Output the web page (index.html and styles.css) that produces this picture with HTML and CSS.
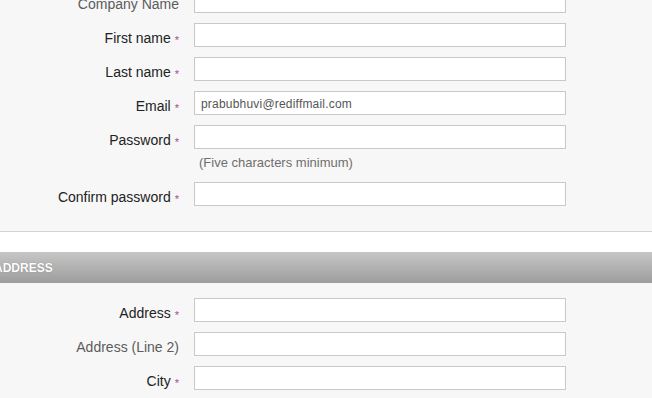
FILE: index.html
```html
<!DOCTYPE html>
<html lang="en">
<head>
    <meta charset="UTF-8">
    <meta name="viewport" content="width=device-width, initial-scale=1.0">
    <title>Register</title>
    <link rel="stylesheet" href="styles.css">
</head>
<body>

<form class="registro">
    <div class="seccion seccion-cuenta">
        <div class="fila fila-primera">
            <label class="opcional" for="company">Company Name</label>
            <input type="text" id="company" name="company">
        </div>
        <div class="fila">
            <label for="firstname">First name<span class="req">*</span></label>
            <input type="text" id="firstname" name="firstname">
        </div>
        <div class="fila">
            <label for="lastname">Last name<span class="req">*</span></label>
            <input type="text" id="lastname" name="lastname">
        </div>
        <div class="fila">
            <label for="email">Email<span class="req">*</span></label>
            <input type="text" id="email" name="email" value="prabubhuvi@rediffmail.com">
        </div>
        <div class="fila fila-pass">
            <label for="password">Password<span class="req">*</span></label>
            <input type="password" id="password" name="password">
        </div>
        <p class="ayuda">(Five characters minimum)</p>
        <div class="fila">
            <label for="confirm">Confirm password<span class="req">*</span></label>
            <input type="password" id="confirm" name="confirm">
        </div>
    </div>

    <h2 class="titulo-seccion">ADDRESS</h2>

    <div class="seccion seccion-direccion">
        <div class="fila">
            <label for="address">Address<span class="req">*</span></label>
            <input type="text" id="address" name="address">
        </div>
        <div class="fila">
            <label class="opcional" for="address2">Address (Line 2)</label>
            <input type="text" id="address2" name="address2">
        </div>
        <div class="fila">
            <label for="city">City<span class="req">*</span></label>
            <input type="text" id="city" name="city">
        </div>
    </div>
</form>

</body>
</html>
```

FILE: styles.css
```css
body {
    font-family: Arial, "Liberation Sans", sans-serif;
    background-color: #fff;
    margin: 0;
    padding: 0;
    overflow: hidden;
}

.registro {
    width: 652px;
}

.seccion {
    background-color: #f7f7f7;
    display: flex;
    flex-direction: column;
    gap: 10px;
}

.seccion-cuenta {
    padding-bottom: 25px;
    border-bottom: 1px solid #d2d2d2;
}

.seccion-direccion {
    padding-top: 15px;
    padding-bottom: 20px;
}

.fila {
    display: flex;
    align-items: center;
}

.fila-primera {
    margin-top: -11px;
}

.fila label {
    width: 179px;
    padding-top: 6px;
    text-align: right;
    font-size: 14px;
    color: #222;
}

.fila label.opcional {
    color: #5c5c5c;
}

.req {
    font-size: 11px;
    color: #a24f8c;
    margin-left: 4px;
    vertical-align: middle;
    position: relative;
    top: 1px;
}

.fila input {
    box-sizing: border-box;
    width: 372px;
    height: 24px;
    margin: 0 0 0 15px;
    border: 1px solid #c9c9c9;
    background: #fff;
    padding: 1px 6px 0;
    font-family: Arial, "Liberation Sans", sans-serif;
    font-size: 12px;
    letter-spacing: 0.2px;
    color: #555;
    outline: none;
}

.ayuda {
    margin: -5px 0 0 199px;
    font-size: 13px;
    line-height: 18px;
    color: #6e6e6e;
}

.titulo-seccion {
    margin: 20px 0 0 0;
    height: 29px;
    padding-top: 2px;
    line-height: 29px;
    font-size: 12px;
    font-weight: bold;
    color: #fff;
    text-indent: -6px;
    text-shadow: 0 0 1px rgba(0,0,0,0.3);
    background: linear-gradient(#c6c6c6, #9d9d9d);
}
```
